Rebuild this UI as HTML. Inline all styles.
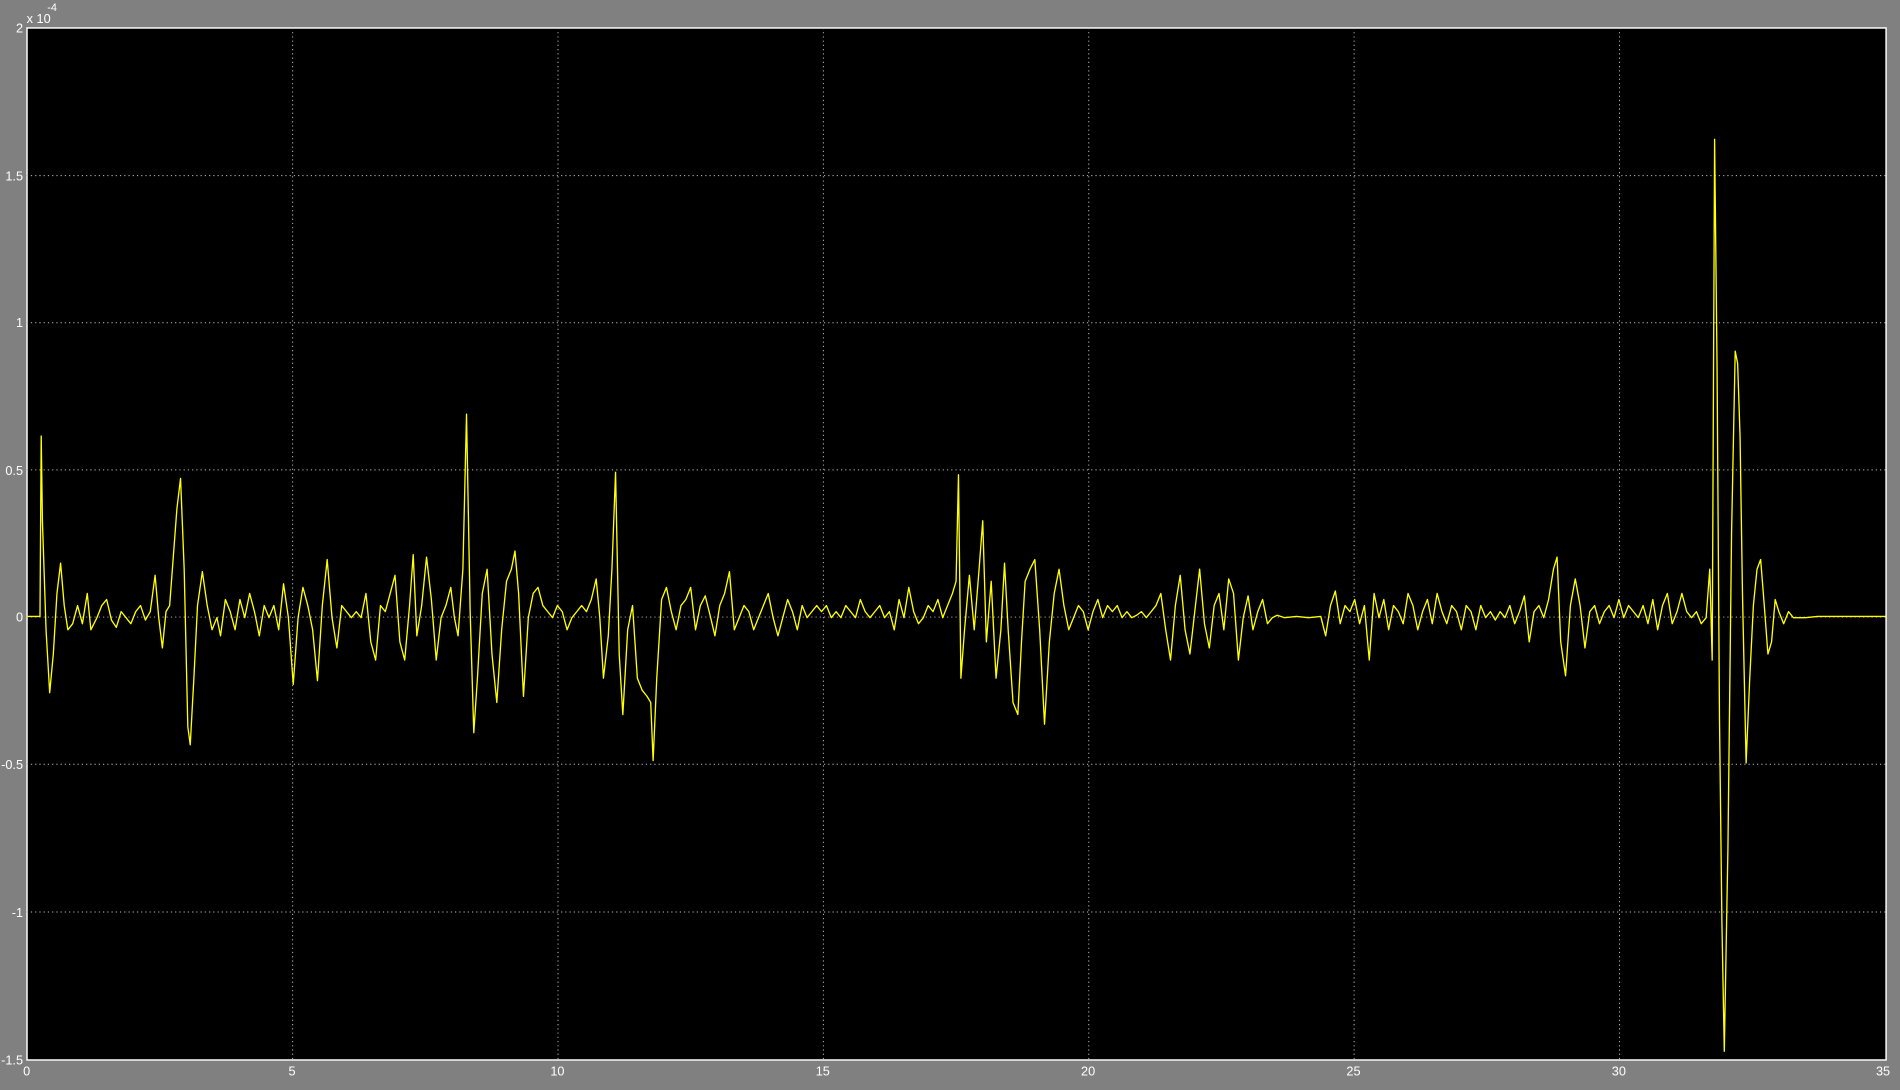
<!DOCTYPE html>
<html><head><meta charset="utf-8"><style>
html,body{margin:0;padding:0;background:#808080;width:1900px;height:1090px;overflow:hidden}
svg{display:block}
text{font-family:"Liberation Sans",sans-serif;font-size:10.5px;fill:#fff}
</style></head><body>
<svg width="1900" height="1090" viewBox="0 0 1568 900" preserveAspectRatio="none">
<rect x="0" y="0" width="1568" height="900" fill="#808080"/>
<rect x="22.3" y="23.1" width="1534.2" height="852.1" fill="#000" stroke="#fff" stroke-width="1.2"/>
<g stroke="#bbb" stroke-width="0.8" stroke-dasharray="1,2.5">
<line x1="241.5" y1="23" x2="241.5" y2="875"/>
<line x1="460.5" y1="23" x2="460.5" y2="875"/>
<line x1="679.5" y1="23" x2="679.5" y2="875"/>
<line x1="898.5" y1="23" x2="898.5" y2="875"/>
<line x1="1117.5" y1="23" x2="1117.5" y2="875"/>
<line x1="1336.5" y1="23" x2="1336.5" y2="875"/>
<line x1="22" y1="145" x2="1556" y2="145"/>
<line x1="22" y1="266.5" x2="1556" y2="266.5"/>
<line x1="22" y1="388" x2="1556" y2="388"/>
<line x1="22" y1="509.5" x2="1556" y2="509.5"/>
<line x1="22" y1="631" x2="1556" y2="631"/>
<line x1="22" y1="753" x2="1556" y2="753"/>
</g>
<polyline fill="none" stroke="#ffff00" stroke-width="1.1" stroke-linejoin="round" points="22,509 33,509 34,360 35,430 38,520 41,572 44,540 47,490 50,465 53,500 56,520 60,515 64,500 68,515 72,490 75,520 80,510 84,500 88,495 92,512 96,518 100,505 104,510 108,515 112,505 116,500 120,512 124,505 128,475 131,510 134,535 137,505 140,500 143,460 146,420 149,395 152,470 155,600 157,615 160,560 163,500 167,472 171,500 175,520 179,510 182,525 186,495 190,505 194,520 198,495 202,510 206,490 210,505 214,525 218,500 222,510 226,500 230,520 234,482 238,510 242,565 246,510 250,485 254,500 258,520 262,562 266,500 270,462 274,510 278,535 282,500 286,505 290,510 294,505 298,510 302,490 306,530 310,545 314,500 318,505 322,490 326,475 330,530 334,545 338,500 341,458 344,525 348,500 352,460 356,495 360,545 364,510 368,500 372,485 375,510 378,525 382,470 385,342 388,505 391,605 394,560 398,490 402,470 406,540 410,580 414,520 418,480 422,470 425,455 428,490 432,575 436,510 440,490 444,485 448,500 452,505 456,510 460,500 464,505 468,520 472,510 476,505 480,500 484,505 488,495 492,478 495,510 498,560 502,525 505,470 508,390 511,540 514,590 518,520 522,500 526,560 530,570 534,575 537,580 539,628 542,560 546,495 550,485 554,505 558,520 562,500 566,495 570,485 574,520 578,500 582,492 586,508 590,525 594,500 598,490 602,472 606,520 610,510 614,500 618,505 622,520 626,510 630,500 634,490 638,510 642,525 646,510 650,495 654,505 658,520 662,500 666,510 670,505 674,500 678,505 682,500 686,510 690,505 694,510 698,500 702,505 706,510 710,495 714,505 718,510 722,505 726,500 730,510 734,505 738,520 742,495 746,510 750,485 754,505 758,515 762,510 766,500 770,505 774,495 778,510 782,500 786,490 789,480 791,392 793,560 796,520 800,475 804,520 808,470 811,430 814,530 818,480 822,560 826,520 829,465 832,520 836,580 840,590 843,530 846,480 850,470 854,462 858,520 862,598 866,530 870,490 874,470 878,500 882,520 886,510 890,500 894,505 898,520 902,505 906,495 910,510 914,500 918,505 922,500 926,510 930,505 934,510 938,508 942,505 946,510 950,505 954,500 958,490 962,520 966,545 970,500 974,475 978,520 982,540 986,505 990,470 994,515 998,535 1002,500 1006,490 1010,520 1014,478 1018,490 1022,545 1026,510 1030,492 1034,520 1038,505 1042,495 1046,515 1050,510 1054,508 1060,510 1070,509 1080,510 1090,509 1094,525 1098,500 1102,488 1106,515 1110,500 1114,505 1118,495 1122,515 1126,500 1130,545 1134,490 1138,510 1142,495 1146,520 1150,500 1154,505 1158,515 1162,490 1166,500 1170,520 1174,505 1178,495 1182,515 1186,490 1190,505 1194,515 1198,500 1202,505 1206,520 1210,500 1214,505 1218,520 1222,500 1226,510 1230,505 1234,512 1238,505 1242,510 1246,500 1250,515 1254,505 1258,492 1262,530 1266,505 1270,500 1274,510 1278,495 1282,470 1285,460 1288,530 1292,558 1296,500 1300,478 1304,500 1308,535 1312,505 1316,500 1320,515 1324,505 1328,500 1332,510 1336,495 1340,510 1344,500 1348,505 1352,510 1356,500 1360,515 1364,495 1368,520 1372,500 1376,490 1380,515 1384,505 1388,490 1392,505 1396,510 1400,505 1404,515 1408,510 1411,470 1413,545 1415,115 1417,300 1419,590 1421,760 1423,868 1426,700 1429,440 1432,290 1434,300 1436,360 1438,490 1441,630 1444,560 1447,500 1450,470 1453,462 1456,500 1459,540 1462,530 1465,495 1468,505 1472,515 1476,505 1480,510 1490,510 1500,509 1556,509"/>
<g text-anchor="end">
<text x="19" y="27">2</text>
<text x="19" y="149">1.5</text>
<text x="19" y="270">1</text>
<text x="19" y="392">0.5</text>
<text x="19" y="513">0</text>
<text x="19" y="635">-0.5</text>
<text x="19" y="757">-1</text>
<text x="19" y="879">-1.5</text>
</g>
<g text-anchor="middle">
<text x="22" y="888">0</text>
<text x="241" y="888">5</text>
<text x="460" y="888">10</text>
<text x="679" y="888">15</text>
<text x="898" y="888">20</text>
<text x="1117" y="888">25</text>
<text x="1336" y="888">30</text>
<text x="1554" y="888">35</text>
</g>
<text x="22" y="19">x 10</text>
<text x="39" y="9" style="font-size:9px">-4</text>
</svg>
</body></html>
